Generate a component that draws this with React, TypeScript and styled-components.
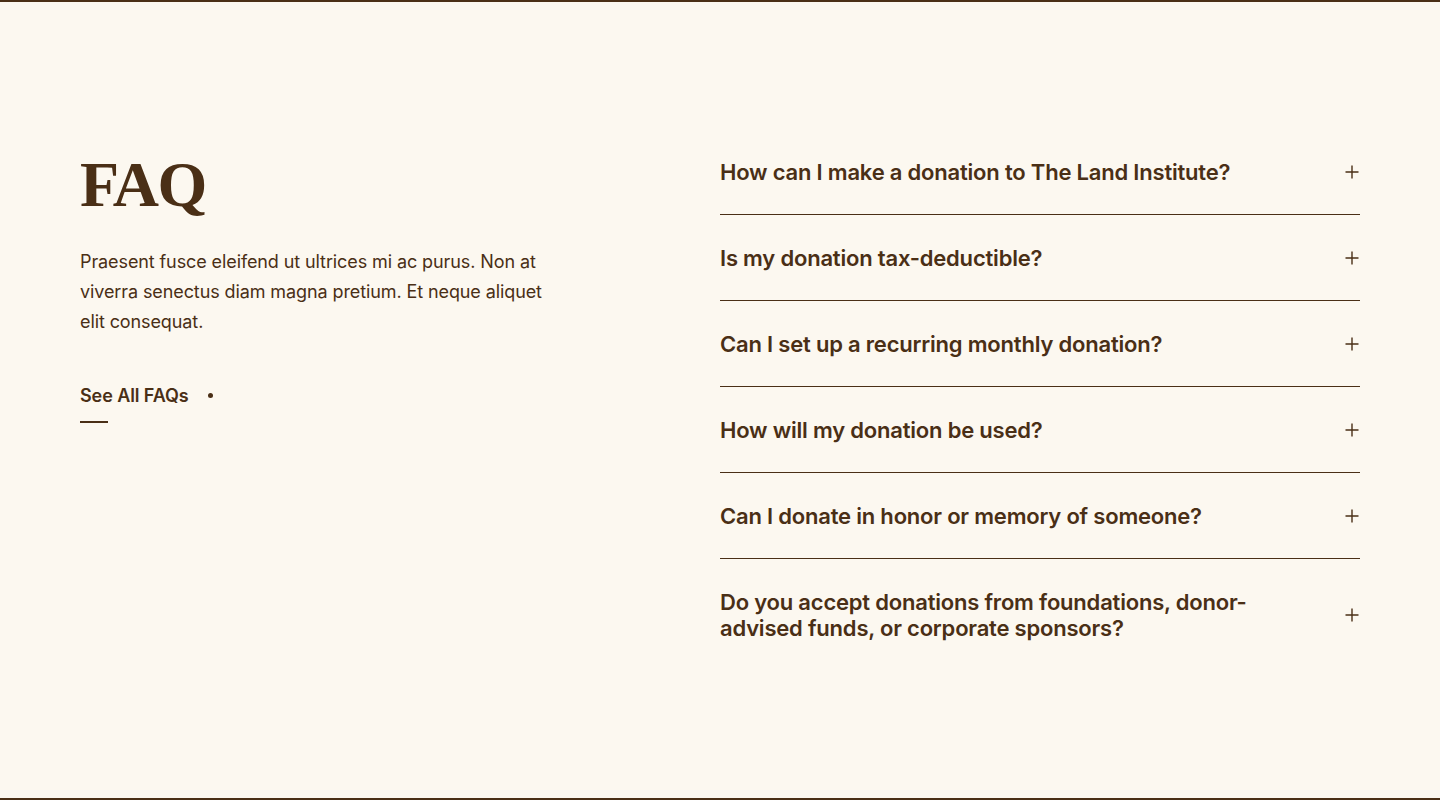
import React from "react";
import styled, { createGlobalStyle } from "styled-components";

const ink = "#4a2f16";

const Global = createGlobalStyle`
  html, body { margin: 0; padding: 0; background: #fcf8f0; }
  body { font-family: Inter, "Liberation Sans", sans-serif; color: ${ink}; }
  * { box-sizing: border-box; }
`;

const Page = styled.div`
  width: 1440px;
  height: 800px;
  background: #fcf8f0;
  border-top: 2px solid ${ink};
  border-bottom: 2px solid ${ink};
`;

const Section = styled.section`
  display: grid;
  grid-template-columns: 640px 640px;
  padding: 127px 80px 0;
`;

const Intro = styled.div`
  display: flex;
  flex-direction: column;
  align-items: flex-start;
  padding-top: 24px;
`;

const Title = styled.h2`
  margin: 0;
  font-family: "Liberation Serif", serif;
  font-weight: 700;
  font-size: 64px;
  line-height: 1;
  letter-spacing: -1.5px;
  color: ${ink};
`;

const Lead = styled.p`
  margin: 30px 0 0;
  max-width: 470px;
  font-size: 18px;
  line-height: 30px;
  letter-spacing: -0.1px;
  color: ${ink};
`;

const MoreLink = styled.a`
  margin-top: 48px;
  display: inline-flex;
  align-items: center;
  gap: 19px;
  font-size: 18px;
  font-weight: 600;
  letter-spacing: -0.1px;
  color: ${ink};
  text-decoration: none;
  position: relative;
  padding-bottom: 17px;
  &::after {
    content: "";
    position: absolute;
    left: 0;
    bottom: 0;
    width: 28px;
    height: 2px;
    background: ${ink};
  }
`;

const Dot = styled.span`
  width: 5px;
  height: 5px;
  border-radius: 50%;
  background: ${ink};
`;

const List = styled.div`
  display: flex;
  flex-direction: column;
`;

const Item = styled.div<{ $last?: boolean }>`
  display: flex;
  align-items: center;
  justify-content: space-between;
  padding: 30px 0 29px;
  border-bottom: ${(p) => (p.$last ? "none" : `1px solid ${ink}`)};
`;

const Question = styled.h3`
  margin: 0;
  max-width: 560px;
  font-size: 22px;
  font-weight: 600;
  line-height: 26px;
  letter-spacing: -0.2px;
  color: ${ink};
`;

const PlusIcon = () => (
  <svg width="14" height="14" viewBox="0 0 14 14" style={{ marginRight: 1 }}>
    <path d="M7 0.5V13.5M0.5 7H13.5" stroke={ink} strokeWidth="1.4" fill="none" />
  </svg>
);

const questions = [
  "How can I make a donation to The Land Institute?",
  "Is my donation tax-deductible?",
  "Can I set up a recurring monthly donation?",
  "How will my donation be used?",
  "Can I donate in honor or memory of someone?",
  "Do you accept donations from foundations, donor-advised funds, or corporate sponsors?",
];

export default function App() {
  return (
    <>
      <Global />
      <Page>
        <Section>
          <Intro>
            <Title>FAQ</Title>
            <Lead>
              Praesent fusce eleifend ut ultrices mi ac purus. Non at viverra senectus diam magna
              pretium. Et neque aliquet elit consequat.
            </Lead>
            <MoreLink href="#">
              See All FAQs
              <Dot />
            </MoreLink>
          </Intro>
          <List>
            {questions.map((q, i) => (
              <Item key={q} $last={i === questions.length - 1}>
                <Question>{q}</Question>
                <PlusIcon />
              </Item>
            ))}
          </List>
        </Section>
      </Page>
    </>
  );
}
